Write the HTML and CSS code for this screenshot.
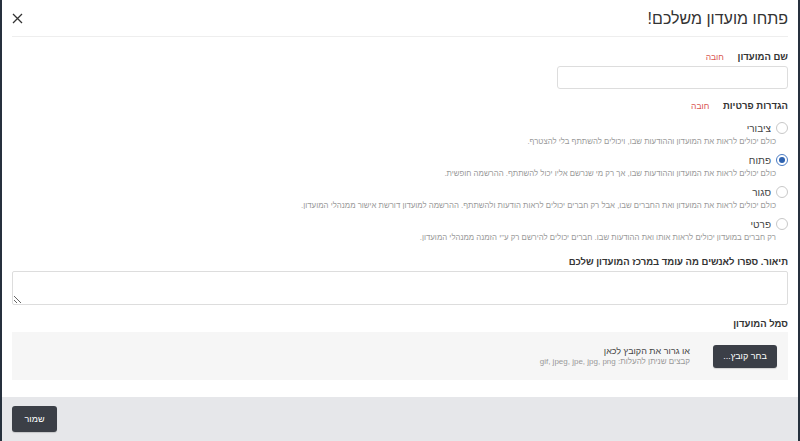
FILE: index.html
```html
<!DOCTYPE html>
<html lang="he" dir="rtl">
<head>
<meta charset="utf-8">
<title>פתחו מועדון משלכם!</title>
<link rel="stylesheet" href="styles.css">
</head>
<body>
<div class="modal">
  <div class="modal-head">
    <h1 class="modal-title">פתחו מועדון משלכם!</h1>
    <button class="close" type="button" aria-label="סגור">
      <svg width="11" height="11" viewBox="0 0 11 11"><path d="M1 1L10 10M10 1L1 10" stroke="#333" stroke-width="1.3" fill="none"/></svg>
    </button>
  </div>

  <div class="modal-body">
    <div class="field-label first">שם המועדון <span class="req">חובה</span></div>
    <input class="text-input" type="text">

    <div class="field-label privacy">הגדרות פרטיות <span class="req">חובה</span></div>
    <div class="options">
      <div class="option">
        <div class="opt-row"><span class="radio"></span><span class="opt-name">ציבורי</span></div>
        <div class="opt-desc">כולם יכולים לראות את המועדון וההודעות שבו, ויכולים להשתתף בלי להצטרף.</div>
      </div>
      <div class="option">
        <div class="opt-row"><span class="radio checked"></span><span class="opt-name">פתוח</span></div>
        <div class="opt-desc">כולם יכולים לראות את המועדון וההודעות שבו, אך רק מי שנרשם אליו יכול להשתתף. ההרשמה חופשית.</div>
      </div>
      <div class="option">
        <div class="opt-row"><span class="radio"></span><span class="opt-name">סגור</span></div>
        <div class="opt-desc">כולם יכולים לראות את המועדון ואת החברים שבו, אבל רק חברים יכולים לראות הודעות ולהשתתף. ההרשמה למועדון דורשת אישור ממנהלי המועדון.</div>
      </div>
      <div class="option">
        <div class="opt-row"><span class="radio"></span><span class="opt-name">פרטי</span></div>
        <div class="opt-desc">רק חברים במועדון יכולים לראות אותו ואת ההודעות שבו. חברים יכולים להירשם רק ע"י הזמנה ממנהלי המועדון.</div>
      </div>
    </div>

    <div class="field-label desc-label">תיאור. ספרו לאנשים מה עומד במרכז המועדון שלכם</div>
    <textarea class="text-area"></textarea>

    <div class="field-label logo-label">סמל המועדון</div>
    <div class="dropzone">
      <button class="btn" type="button">בחר קובץ...</button>
      <div class="drop-text">
        <div class="drop-main">או גרור את הקובץ לכאן</div>
        <div class="drop-types">קבצים שניתן להעלות: gif, jpeg, jpe, jpg, png</div>
      </div>
    </div>
  </div>

  <div class="modal-foot">
    <button class="btn save" type="button">שמור</button>
  </div>
</div>
</body>
</html>
```
FILE: styles.css
```css
html, body {
  margin: 0;
  height: 100%;
}

body {
  background: #26303d;
  font-family: "Liberation Sans", Arial, "DejaVu Sans", sans-serif;
  color: #333;
  overflow: hidden;
}

.modal {
  margin: 0 2px 0 2px;
  height: 441px;
  background: #fff;
  display: flex;
  flex-direction: column;
}

.modal-head {
  margin: 0 10px;
  height: 36px;
  border-bottom: 1px solid #eee;
  display: flex;
  align-items: center;
  justify-content: space-between;
}

.modal-title {
  margin: 0;
  font-size: 16px;
  font-weight: normal;
  color: #333;
  line-height: 20px;
  padding-top: 2px;
}

.close {
  border: 0;
  background: none;
  padding: 0;
  width: 11px;
  height: 11px;
  display: flex;
}

.modal-body {
  flex: 1;
  padding: 0 10px;
  display: flex;
  flex-direction: column;
}

.field-label {
  font-size: 9.5px;
  font-weight: bold;
  line-height: 12px;
  color: #333;
}

.field-label.first { margin-top: 14px; }
.field-label.privacy { margin-top: 11px; }
.field-label.desc-label { margin-top: 7px; }
.field-label.logo-label { margin-top: 13px; }

.req {
  font-weight: normal;
  font-size: 8.5px;
  color: #d9534f;
  margin-right: 11px;
}

.text-input {
  margin-top: 3px;
  width: 231px;
  height: 23px;
  box-sizing: border-box;
  border: 1px solid #ddd;
  border-radius: 3px;
  align-self: flex-start;
}

.options {
  margin-top: 9px;
  display: flex;
  flex-direction: column;
}

.option {
  height: 32px;
}

.opt-row {
  display: flex;
  align-items: center;
  gap: 5px;
  height: 14px;
}

.radio {
  width: 10px;
  height: 10px;
  border: 1px solid #c8c8c8;
  border-radius: 50%;
  box-sizing: content-box;
  display: flex;
  align-items: center;
  justify-content: center;
}

.radio.checked {
  border-color: #4a7cc4;
}

.radio.checked::after {
  content: "";
  width: 6px;
  height: 6px;
  border-radius: 50%;
  background: #2d62b0;
}

.opt-name {
  font-size: 10px;
  color: #444;
}

.opt-desc {
  font-size: 7.8px;
  line-height: 12px;
  color: #999;
  margin-top: 1px;
  padding-right: 12px;
  white-space: nowrap;
}

.text-area {
  margin-top: 3px;
  height: 34px;
  box-sizing: border-box;
  border: 1px solid #ddd;
  border-radius: 2px;
  resize: vertical;
  width: 100%;
}

.dropzone {
  margin-top: 2px;
  height: 48px;
  background: #f6f6f6;
  display: flex;
  align-items: center;
  padding: 0 11px;
  gap: 23px;
}

.btn {
  border: 0;
  border-radius: 3px;
  background: #3b3f47;
  color: #fff;
  font-family: inherit;
  font-size: 9px;
  padding: 0;
  box-shadow: 0 1px 1px rgba(0,0,0,0.15);
}

.dropzone .btn {
  width: 64px;
  height: 23px;
}

.drop-text {
  display: flex;
  flex-direction: column;
}

.drop-main {
  font-size: 9px;
  line-height: 11px;
  color: #444;
}

.drop-types {
  font-size: 8px;
  line-height: 10px;
  color: #999;
}

.modal-foot {
  height: 44px;
  background: #e6e7ea;
  display: flex;
  align-items: center;
  padding: 0 10px;
  justify-content: flex-end;
}

.btn.save {
  width: 45px;
  height: 26px;
}
```
